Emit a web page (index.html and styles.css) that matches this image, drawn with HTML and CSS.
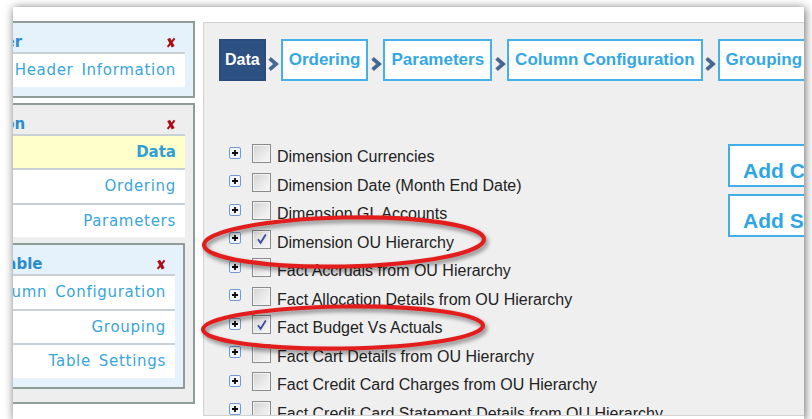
FILE: index.html
```html
<!DOCTYPE html>
<html lang="en">
<head>
<meta charset="utf-8">
<title>Report Designer</title>
<link rel="stylesheet" href="styles.css">
</head>
<body>
<div class="frame">
  <aside class="sidebar">
    <section class="box box-blue">
      <div class="box-head head-report">
        <span class="box-title">Header</span>
        <svg class="close" width="10" height="11" viewBox="0 0 10 11"><path class="close-a" d="M2.6 1.4 L7.2 9.8"/><path class="close-b" d="M8.6 1.3 L1.6 9.8"/></svg>
      </div>
      <a class="box-row" href="#">Header Information</a>
    </section>
    <section class="box box-grey">
      <div class="box-head head-section">
        <span class="box-title">Section</span>
        <svg class="close" width="10" height="11" viewBox="0 0 10 11"><path class="close-a" d="M2.6 1.4 L7.2 9.8"/><path class="close-b" d="M8.6 1.3 L1.6 9.8"/></svg>
      </div>
      <a class="box-row active" href="#">Data</a>
      <a class="box-row" href="#">Ordering</a>
      <a class="box-row" href="#">Parameters</a>
      <section class="box box-blue nested">
        <div class="box-head head-table">
          <span class="box-title">Table</span>
          <svg class="close" width="10" height="11" viewBox="0 0 10 11"><path class="close-a" d="M2.6 1.4 L7.2 9.8"/><path class="close-b" d="M8.6 1.3 L1.6 9.8"/></svg>
        </div>
        <a class="box-row" href="#">Column Configuration</a>
        <a class="box-row" href="#">Grouping</a>
        <a class="box-row" href="#">Table Settings</a>
      </section>
    </section>
  </aside>

  <main class="panel">
    <nav class="steps">
      <span class="step current">Data</span>
      <span class="step-sep"><svg width="12" height="16" viewBox="0 0 12 16"><path d="M2.6 2.4 L9 8 L2.6 13.6"/></svg></span>
      <span class="step">Ordering</span>
      <span class="step-sep"><svg width="12" height="16" viewBox="0 0 12 16"><path d="M2.6 2.4 L9 8 L2.6 13.6"/></svg></span>
      <span class="step">Parameters</span>
      <span class="step-sep"><svg width="12" height="16" viewBox="0 0 12 16"><path d="M2.6 2.4 L9 8 L2.6 13.6"/></svg></span>
      <span class="step">Column Configuration</span>
      <span class="step-sep"><svg width="12" height="16" viewBox="0 0 12 16"><path d="M2.6 2.4 L9 8 L2.6 13.6"/></svg></span>
      <span class="step">Grouping</span>
      <span class="step-sep"><svg width="12" height="16" viewBox="0 0 12 16"><path d="M2.6 2.4 L9 8 L2.6 13.6"/></svg></span>
      <span class="step">Table Settings</span>
    </nav>

    <div class="content">
      <ul class="tree">
        <li><svg class="expander" width="12" height="12" viewBox="0 0 12 12"><rect x="0.5" y="0.5" width="11" height="11" rx="1.5"/><path d="M3 6h6M6 3v6"/></svg><span class="check"></span><span class="label">Dimension Currencies</span></li>
        <li><svg class="expander" width="12" height="12" viewBox="0 0 12 12"><rect x="0.5" y="0.5" width="11" height="11" rx="1.5"/><path d="M3 6h6M6 3v6"/></svg><span class="check"></span><span class="label">Dimension Date (Month End Date)</span></li>
        <li><svg class="expander" width="12" height="12" viewBox="0 0 12 12"><rect x="0.5" y="0.5" width="11" height="11" rx="1.5"/><path d="M3 6h6M6 3v6"/></svg><span class="check"></span><span class="label">Dimension GL Accounts</span></li>
        <li><svg class="expander" width="12" height="12" viewBox="0 0 12 12"><rect x="0.5" y="0.5" width="11" height="11" rx="1.5"/><path d="M3 6h6M6 3v6"/></svg><span class="check checked"><svg width="16" height="16" viewBox="0 0 16 16"><path d="M4 8.2 L6.6 11.8 L11.8 3.6"/></svg></span><span class="label">Dimension OU Hierarchy</span></li>
        <li><svg class="expander" width="12" height="12" viewBox="0 0 12 12"><rect x="0.5" y="0.5" width="11" height="11" rx="1.5"/><path d="M3 6h6M6 3v6"/></svg><span class="check"></span><span class="label">Fact Accruals from OU Hierarchy</span></li>
        <li><svg class="expander" width="12" height="12" viewBox="0 0 12 12"><rect x="0.5" y="0.5" width="11" height="11" rx="1.5"/><path d="M3 6h6M6 3v6"/></svg><span class="check"></span><span class="label">Fact Allocation Details from OU Hierarchy</span></li>
        <li><svg class="expander" width="12" height="12" viewBox="0 0 12 12"><rect x="0.5" y="0.5" width="11" height="11" rx="1.5"/><path d="M3 6h6M6 3v6"/></svg><span class="check checked"><svg width="16" height="16" viewBox="0 0 16 16"><path d="M4 8.2 L6.6 11.8 L11.8 3.6"/></svg></span><span class="label">Fact Budget Vs Actuals</span></li>
        <li><svg class="expander" width="12" height="12" viewBox="0 0 12 12"><rect x="0.5" y="0.5" width="11" height="11" rx="1.5"/><path d="M3 6h6M6 3v6"/></svg><span class="check"></span><span class="label">Fact Cart Details from OU Hierarchy</span></li>
        <li><svg class="expander" width="12" height="12" viewBox="0 0 12 12"><rect x="0.5" y="0.5" width="11" height="11" rx="1.5"/><path d="M3 6h6M6 3v6"/></svg><span class="check"></span><span class="label">Fact Credit Card Charges from OU Hierarchy</span></li>
        <li><svg class="expander" width="12" height="12" viewBox="0 0 12 12"><rect x="0.5" y="0.5" width="11" height="11" rx="1.5"/><path d="M3 6h6M6 3v6"/></svg><span class="check"></span><span class="label">Fact Credit Card Statement Details from OU Hierarchy</span></li>
        <li><svg class="expander" width="12" height="12" viewBox="0 0 12 12"><rect x="0.5" y="0.5" width="11" height="11" rx="1.5"/><path d="M3 6h6M6 3v6"/></svg><span class="check"></span><span class="label">Fact Invoice Details from OU Hierarchy</span></li>
      </ul>
      <div class="actions">
        <button class="btn" type="button">Add Column</button>
        <button class="btn" type="button">Add Section</button>
      </div>
    </div>
  </main>
</div>

<svg class="marks" width="812" height="419" viewBox="0 0 812 419">
  <ellipse cx="344" cy="242" rx="140" ry="24.5" transform="rotate(-1.2 344 242)"/>
  <ellipse cx="343" cy="327.5" rx="140" ry="21" transform="rotate(-0.8 343 327.5)"/>
</svg>
</body>
</html>
```

FILE: styles.css
```css
html, body {
  margin: 0;
  height: 100%;
  overflow: hidden;
  background: #ffffff;
}

body {
  position: relative;
}

/* window holding the designer */
.frame {
  margin: 7px 0 0 13px;
  width: 791px;
  height: 413px;
  background: #ffffff;
  box-shadow: 1px 1px 9px rgba(0, 0, 0, 0.6);
  display: flex;
  align-items: flex-start;
  overflow: hidden;
}

/* ---------- left navigation ---------- */
.sidebar {
  flex: none;
  width: 240px;
  margin: 14px 0 0 -58px;
  display: flex;
  flex-direction: column;
  gap: 5px;
  font-family: "DejaVu Sans", Verdana, sans-serif;
}

.box {
  box-sizing: border-box;
  border: 2px solid #8f9c97;
  padding: 0 8px 9px 0;
}

.box-blue { background: #e5f2fc; }
.box-grey { background: #eeeeee; }

.nested {
  margin: 6px 0 4.5px 0;
}

.box-head {
  height: 29px;
  box-sizing: border-box;
  display: flex;
  align-items: flex-end;
  justify-content: space-between;
  padding: 0 9px 1px 4px;
}

.head-section { padding-left: 5px; }
.head-table { padding-left: 39px; }

.box-title {
  font-size: 15px;
  font-weight: bold;
  line-height: 18px;
  color: #2b8bcc;
  white-space: nowrap;
}

.close {
  flex: none;
  margin-bottom: 3px;
  fill: none;
  stroke: #ad0c14;
  stroke-linecap: butt;
}

.close-a { stroke-width: 3.2; }
.close-b { stroke-width: 2; }

.box-row {
  display: block;
  height: 32.5px;
  line-height: 32.5px;
  border-top: 2px solid #c9d1d7;
  background: #ffffff;
  text-align: right;
  padding-right: 9px;
  font-size: 15px;
  letter-spacing: 0.7px;
  word-spacing: 2.5px;
  color: #3aa5db;
  white-space: nowrap;
  text-decoration: none;
}

.box-row.active {
  background: #ffffcc;
  font-weight: bold;
  letter-spacing: 0;
  color: #2f9fd6;
}

/* ---------- main panel ---------- */
.panel {
  flex: none;
  margin: 15px 0 0 8px;
  width: 640px;
  height: 394px;
  box-sizing: border-box;
  border: 1px solid #d2d2d2;
  background: #efefef;
  padding: 16px 0 0 15px;
  overflow: hidden;
  font-family: "Liberation Sans", Arial, sans-serif;
}

.steps {
  display: flex;
  align-items: flex-start;
  height: 42px;
  white-space: nowrap;
}

.step {
  flex: none;
  height: 42px;
  box-sizing: border-box;
  border: 2px solid #45b0ea;
  background: #ffffff;
  color: #35a7e4;
  font-size: 17px;
  font-weight: bold;
  line-height: 38px;
  padding: 0 6px;
}

.step.current {
  background: #2c5182;
  border-color: #2a4d7c;
  color: #ffffff;
  font-size: 16px;
  padding: 0 4px;
}

.step-sep {
  flex: none;
  width: 15px;
  display: flex;
  justify-content: center;
  padding-top: 16.5px;
}

.step-sep path {
  fill: none;
  stroke: #46688f;
  stroke-width: 3.8;
}

.content {
  display: flex;
  align-items: flex-start;
  margin-top: 61px;
}

.tree {
  flex: none;
  list-style: none;
  margin: 0;
  padding: 1px 0 0 10px;
  width: 499px;
}

.tree li {
  display: flex;
  align-items: flex-start;
  height: 28.5px;
  white-space: nowrap;
}

.expander {
  flex: none;
  margin-top: 3.5px;
}

.expander rect {
  fill: #f1f5fa;
  stroke: #6f9bd0;
}

.expander path {
  stroke: #0c0c0c;
  stroke-width: 1.8;
}

.check {
  flex: none;
  width: 19px;
  height: 19px;
  box-sizing: border-box;
  margin: 1px 0 0 11px;
  border: 1px solid #8a8b8b;
  background: linear-gradient(135deg, #d2d2d2 0%, #e9e9e9 55%, #f8f8f8 100%);
  box-shadow: inset 0 0 0 1px #f4f4f4;
  display: flex;
  align-items: center;
  justify-content: center;
}

.check svg path {
  fill: none;
  stroke: #3c4c9e;
  stroke-width: 1.8;
}

.label {
  margin-left: 6px;
  font-size: 16px;
  line-height: 28.5px;
  color: #222222;
}

.actions {
  flex: none;
  display: flex;
  flex-direction: column;
  gap: 7px;
  margin-top: 2px;
}

.btn {
  display: block;
  width: 160px;
  height: 43px;
  box-sizing: border-box;
  margin: 0;
  border: 2px solid #42aee9;
  background: #ffffff;
  color: #2ea5e6;
  font-family: "Liberation Sans", Arial, sans-serif;
  font-size: 21px;
  font-weight: bold;
  line-height: 23px;
  text-align: left;
  padding: 10px 0 0 13px;
  white-space: nowrap;
  -webkit-appearance: none;
  appearance: none;
}

/* red review marks drawn over the list */
.marks {
  position: absolute;
  left: 0;
  top: 0;
  pointer-events: none;
  filter: drop-shadow(2px 3px 2px rgba(0, 0, 0, 0.45));
}

.marks ellipse {
  fill: none;
  stroke: #e31c1c;
  stroke-width: 4.2;
}
```
